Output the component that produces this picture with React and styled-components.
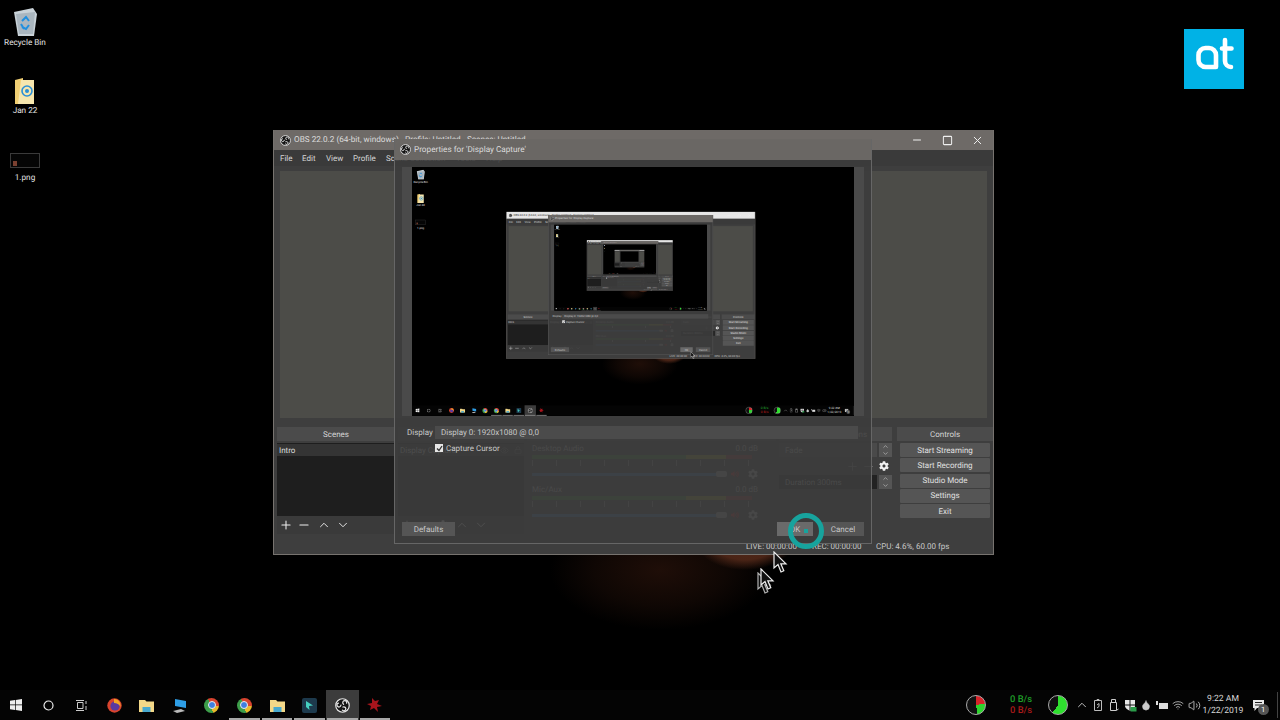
import styled, { createGlobalStyle } from 'styled-components'
import { Minus, Plus, Square, X, ChevronUp, ChevronDown, Eye, Lock, Droplet, Wifi, Volume2 } from 'lucide-react'
import { FaCog, FaVolumeUp } from 'react-icons/fa'

const SCALE = 0.3453
const MAX_DEPTH = 3

const GlobalStyle = createGlobalStyle`
  html, body {
    margin: 0;
    width: 1280px;
    height: 720px;
    overflow: hidden;
    background: #000;
    font-family: Roboto, "Liberation Sans", sans-serif;
    text-rendering: geometricPrecision;
  }
`

const Desktop = styled.div`
  width: 1280px;
  height: 720px;
  display: flex;
  flex-direction: column;
  background:
    radial-gradient(ellipse 50px 30px at 745px 540px, #552a1a 0%, #4a2416 66%, transparent 100%),
    radial-gradient(ellipse 110px 60px at 660px 570px, #1f0e08 0%, #0f0704 60%, transparent 100%),
    #000;
`
const WorkArea = styled.div`
  position: relative;
  flex: 1;
`
const IconColumn = styled.div`
  width: 50px;
  display: flex;
  flex-direction: column;
  align-items: center;
  padding-top: 7px;
`
const DesktopItem = styled.div`
  display: flex;
  flex-direction: column;
  align-items: center;
  height: ${(p) => p.$h}px;
  gap: ${(p) => p.$gap || 0}px;
  color: #e4e4e4;
  font-size: 8.2px;
  white-space: nowrap;
`
const Thumb = styled.div`
  width: 30px;
  height: 15px;
  margin-top: 1px;
  border: 1px solid #3a3a3a;
  background: #050505;
  display: flex;
  align-items: flex-end;
  padding: 0 0 1px 2px;
  box-sizing: border-box;
`
const ThumbDot = styled.div`
  width: 4px;
  height: 5px;
  background: #7a4030;
`
const LogoBox = styled.div`
  position: absolute;
  left: 1184px;
  top: 29px;
  width: 60px;
  height: 60px;
  background: #00b2e6;
`
const Win = styled.div`
  position: absolute;
  left: 273px;
  top: 130px;
  width: 721px;
  height: 425px;
  box-sizing: border-box;
  display: flex;
  flex-direction: column;
  background: #3e3e3e;
  border: 1px solid #77736f;
  border-top: none;
  color: #d6d6d6;
  font-size: 8px;
`
const TitleBar = styled.div`
  height: 20px;
  flex: none;
  display: flex;
  align-items: center;
  padding-left: 6px;
  gap: 3px;
  background: ${(p) => (p.$light ? '#e6e6e6' : '#6e6a67')};
  color: ${(p) => (p.$light ? '#333' : '#dcdcdc')};
  font-size: 8.2px;
  white-space: nowrap;
`
const WinButtons = styled.div`
  margin-left: auto;
  display: flex;
  color: #f0f0f0;
`
const WinButton = styled.div`
  width: 30px;
  height: 20px;
  margin-right: ${(p) => p.$mr || 0}px;
  display: flex;
  align-items: center;
  justify-content: center;
`
const MenuBar = styled.div`
  height: 16px;
  flex: none;
  display: flex;
  align-items: center;
  padding-left: 6px;
  background: #3a3a3a;
`
const MenuItem = styled.span`
  width: ${(p) => p.$w}px;
  white-space: nowrap;
`
const MainPreview = styled.div`
  height: 247px;
  flex: none;
  margin: 5px 6px 9px;
  background: #4c4c48;
`
const Docks = styled.div`
  flex: 1;
  display: grid;
  grid-template-columns: 118px 126px 249px 115px 96px;
  gap: 3px;
  padding: 0 0 0 3px;
  min-height: 0;
`
const Dock = styled.div`
  display: flex;
  flex-direction: column;
  min-width: 0;
`
const TransitionDock = styled(Dock)`
  padding-right: 2px;
`
const DockHead = styled.div`
  height: 14px;
  flex: none;
  margin-bottom: 2px;
  display: flex;
  align-items: center;
  justify-content: center;
  background: #4b4b4b;
`
const List = styled.div`
  height: 73px;
  flex: none;
  background: #1e1e1e;
  padding-top: 1px;
  box-sizing: border-box;
`
const ListRow = styled.div`
  height: 12px;
  display: flex;
  align-items: center;
  gap: 3px;
  padding: 0 2px;
  background: #343434;
  color: #dcdcdc;
`
const RowIcons = styled.div`
  margin-left: auto;
  display: flex;
  gap: 5px;
  color: #777;
`
const Toolbar = styled.div`
  height: 18px;
  display: flex;
  align-items: center;
  background: #3a3a3a;
  color: #eee;
`
const ToolSlot = styled.div`
  width: ${(p) => p.$w}px;
  display: flex;
  justify-content: center;
`
const Channel = styled.div`
  height: 41px;
  flex: none;
  padding: 1px 6px 0 5px;
  box-sizing: border-box;
`
const ChannelHead = styled.div`
  display: flex;
  justify-content: space-between;
  height: 11px;
  padding-right: 12px;
  color: #bbb;
`
const Meter = styled.div`
  height: 4px;
  margin-right: 18px;
  background: linear-gradient(90deg, #3f7a3a 0 70%, #8a8a30 70% 88%, #8a3a3a 88%);
`
const Ticks = styled.div`
  height: 6px;
  margin: 1px 18px 0 0;
  background: repeating-linear-gradient(90deg, #888 0 1px, transparent 1px 24px);
`
const SliderRow = styled.div`
  display: flex;
  align-items: center;
  height: 12px;
  margin-top: 2px;
`
const SliderTrack = styled.div`
  width: 184px;
  height: 3px;
  background: #3d6ea5;
`
const SliderHandle = styled.div`
  width: 11px;
  height: 6px;
  border-radius: 2px;
  background: #999;
`
const RedIcon = styled.div`
  margin-left: 4px;
  display: flex;
  color: #c42a2a;
`
const GearSlot = styled.div`
  margin-left: 9px;
  display: flex;
  color: #aaa;
`
const ComboRow = styled.div`
  display: flex;
  align-items: center;
  height: 14px;
  gap: 2px;
`
const Combo = styled.div`
  flex: 1;
  height: 14px;
  padding-left: 6px;
  display: flex;
  align-items: center;
  background: ${(p) => p.$bg || '#4a4a4a'};
  color: #bbb;
`
const Spinner = styled.div`
  width: 13px;
  height: 14px;
  display: flex;
  flex-direction: column;
  align-items: center;
  justify-content: center;
  background: #555;
  color: #ccc;
`
const ActionRow = styled.div`
  display: flex;
  align-items: center;
  justify-content: flex-end;
  height: 18px;
  color: #888;
`
const GearBright = styled.div`
  width: 16px;
  display: flex;
  justify-content: center;
  color: ${(p) => p.$color || '#f2f2f2'};
`
const ControlButton = styled.div`
  height: 14px;
  margin: 0 3px 1.3px 3px;
  display: flex;
  align-items: center;
  justify-content: center;
  border-radius: 1px;
  background: #555;
  color: #e0e0e0;
`
const StatusBar = styled.div`
  height: 15px;
  flex: none;
  display: flex;
  align-items: center;
  justify-content: flex-end;
  padding-right: 46px;
`
const StatusText = styled.span`
  width: ${(p) => p.$w}px;
  white-space: nowrap;
  color: #c8c8c8;
`
const Dialog = styled.div`
  position: absolute;
  left: 394px;
  top: 139px;
  width: 478px;
  height: 405px;
  box-sizing: border-box;
  display: flex;
  flex-direction: column;
  border: 1px solid #666;
  border-top: none;
  background: rgba(60, 60, 60, 0.9);
  color: #c8c8c8;
  font-size: 8px;
`
const DialogTitle = styled.div`
  height: 21px;
  flex: none;
  display: flex;
  align-items: center;
  gap: 3px;
  padding-left: 5px;
  background: rgba(110, 106, 103, 0.93);
  color: #dcdcdc;
  font-size: 8.2px;
  white-space: nowrap;
`
const PreviewStrip = styled.div`
  height: 249px;
  flex: none;
  margin: 7px 7px 0;
  padding: 0 10px;
  background: #4a4a4a;
`
const PreviewScreen = styled.div`
  width: 442px;
  height: 249px;
  overflow: hidden;
  background: #000;
`
const Scaled = styled.div`
  width: 1280px;
  height: 720px;
  transform: scale(${SCALE});
  transform-origin: 0 0;
`
const DisplayRow = styled.div`
  display: flex;
  align-items: center;
  height: 13px;
  margin: 10px 13px 0 12px;
`
const DisplayLabel = styled.span`
  width: 28px;
`
const DisplayCombo = styled.div`
  flex: 1;
  height: 13px;
  display: flex;
  align-items: center;
  padding-left: 6px;
  background: #4b4b4b;
`
const CheckRow = styled.div`
  display: flex;
  align-items: center;
  gap: 3px;
  height: 10px;
  margin: 4px 0 0 40px;
`
const CheckBox = styled.div`
  width: 8px;
  height: 8px;
  display: flex;
  align-items: center;
  justify-content: center;
  background: #e6e6e6;
`
const ButtonRow = styled.div`
  display: flex;
  align-items: center;
  height: 14px;
  margin: auto 7px 7px 7px;
`
const DialogButton = styled.div`
  width: ${(p) => p.$w}px;
  height: 14px;
  margin-left: ${(p) => p.$ml || 0}px;
  display: flex;
  align-items: center;
  justify-content: center;
  background: ${(p) => p.$bg || '#555'};
`
const Ring = styled.div`
  position: absolute;
  left: 788px;
  top: 513px;
  width: 36px;
  height: 36px;
  box-sizing: border-box;
  border: 5px solid #17a39d;
  border-radius: 50%;
  display: flex;
  align-items: center;
  justify-content: center;
`
const RingDot = styled.div`
  width: 4px;
  height: 4px;
  background: #17a39d;
`
const CursorMark = styled.svg`
  position: absolute;
  left: ${(p) => p.$x}px;
  top: ${(p) => p.$y}px;
  opacity: ${(p) => p.$o || 1};
`
const Taskbar = styled.div`
  height: 30px;
  flex: none;
  display: flex;
  align-items: center;
  background: #040404;
  color: #e6e6e6;
`
const TaskSlot = styled.div`
  position: relative;
  width: 32.6px;
  height: 30px;
  flex: none;
  display: flex;
  align-items: center;
  justify-content: center;
  background: ${(p) => (p.$active ? '#3c3c3c' : 'transparent')};
  &::after {
    content: '';
    position: absolute;
    left: 1px;
    right: 1px;
    bottom: 0;
    height: 2px;
    background: ${(p) => (p.$open ? '#a8a8a8' : 'transparent')};
  }
`
const Chrome = styled.div`
  width: 15px;
  height: 15px;
  border-radius: 50%;
  display: flex;
  align-items: center;
  justify-content: center;
  background: conic-gradient(from -30deg, #d8432f 0 120deg, #e8b92c 120deg 200deg, #3d9e4a 200deg 360deg);
`
const ChromeEye = styled.div`
  width: 6px;
  height: 6px;
  border-radius: 50%;
  border: 1px solid #eee;
  background: #3f7fe0;
`
const Tray = styled.div`
  margin-left: auto;
  display: flex;
  align-items: center;
  height: 30px;
  padding-right: 2px;
`
const TrayItem = styled.div`
  width: ${(p) => p.$w}px;
  margin-left: ${(p) => p.$ml || 0}px;
  flex: none;
  display: flex;
  align-items: center;
  justify-content: center;
  color: #c9c9c9;
`
const Pie = styled.div`
  width: 20px;
  height: 20px;
  box-sizing: border-box;
  border-radius: 50%;
  border: 1px solid #aaa;
  background: ${(p) => p.$fill};
`
const NetSpeed = styled.div`
  display: flex;
  flex-direction: column;
  align-items: center;
  font-size: 9.4px;
  line-height: 11px;
  font-weight: 500;
`
const NetLine = styled.span`
  color: ${(p) => p.$color};
`
const Clock = styled.div`
  display: flex;
  flex-direction: column;
  align-items: center;
  font-size: 8.6px;
  line-height: 12px;
  color: #d8d8d8;
  white-space: nowrap;
`
const NoteWrap = styled.div`
  position: relative;
  display: flex;
`
const NoteBadge = styled.div`
  position: absolute;
  right: -5px;
  bottom: -4px;
  width: 11px;
  height: 11px;
  border-radius: 50%;
  background: #555;
  color: #fff;
  font-size: 7.5px;
  line-height: 11px;
  text-align: center;
`
const TraySep = styled.div`
  width: 1px;
  height: 26px;
  margin-left: 5px;
  background: #444;
`

function ObsLogo({ size = 10 }) {
  return (
    <svg width={size} height={size} viewBox="0 0 20 20" fill="none">
      <circle cx="10" cy="10" r="9" fill="#151515" stroke="#e8e8e8" strokeWidth="1.6" />
      {[0, 120, 240].map((a) => (
        <path
          key={a}
          transform={`rotate(${a} 10 10)`}
          d="M11.5 8.5 C9.5 6.5 10 3.8 13 3.6 C15 3.5 16 5.5 15.5 7"
          stroke="#e8e8e8"
          strokeWidth="1.6"
          strokeLinecap="round"
        />
      ))}
    </svg>
  )
}

function Cursor({ x, y, o }) {
  return (
    <CursorMark $x={x} $y={y} $o={o} width="15" height="23" viewBox="0 0 15 23">
      <path d="M1 1 V17 L5 13.5 L8 21 L10.8 19.8 L7.8 12.8 H13 Z" fill="#111" stroke="#eee" strokeWidth="1.2" />
    </CursorMark>
  )
}

function RecycleBin() {
  return (
    <svg width="26" height="30" viewBox="0 0 26 30">
      <path d="M2 5 L21 1 L25 7 L22 29 H6 Z" fill="#c9d2d8" />
      <path d="M4 7 L23 5 L21 27 H7 Z" fill="#aab6bf" />
      <path d="M10 14 L14 10 L17 14 M17 18 L14 22 L10 20 M9 17 L12 22" fill="none" stroke="#1f8fe0" strokeWidth="2" />
    </svg>
  )
}

function FolderRing() {
  return (
    <svg width="20" height="28" viewBox="0 0 20 28">
      <path d="M0 3 L8 1 V27 H0 Z" fill="#f0cf74" />
      <path d="M6 3 H19 V27 H3 Z" fill="#f6e6ae" />
      <circle cx="12" cy="14" r="5" fill="none" stroke="#2a8fd6" strokeWidth="1.6" />
      <circle cx="12" cy="14" r="2" fill="#2a8fd6" />
    </svg>
  )
}

function AtLogo() {
  return (
    <svg width="60" height="60" viewBox="0 0 60 60" fill="none" stroke="#fff" strokeWidth="4.6" strokeLinecap="round">
      <path d="M32 38 V26 a7 7 0 0 0 -7 -7 h-3.5 a7 7 0 0 0 -7 7 v5 a7 7 0 0 0 7 7 H32" />
      <path d="M41 11 V32 a6 6 0 0 0 6 6 M38 19.5 H47.5" />
    </svg>
  )
}

function FolderIcon() {
  return (
    <svg width="15" height="13" viewBox="0 0 15 13">
      <path d="M0 1 H6 L7.5 2.5 H15 V13 H0 Z" fill="#f3d888" />
      <rect x="3.5" y="8" width="8" height="5" fill="#48a9cf" />
    </svg>
  )
}

function TaskIcons() {
  return (
    <>
      <TaskSlot>
        <svg width="12" height="12" viewBox="0 0 12 12" fill="#eee">
          <path d="M0 1.7 L5 1 V5.6 H0 Z M5.7 .9 L12 0 V5.6 H5.7 Z M0 6.3 H5 V11 L0 10.3 Z M5.7 6.3 H12 V12 L5.7 11.1 Z" />
        </svg>
      </TaskSlot>
      <TaskSlot>
        <svg width="11" height="11" viewBox="0 0 11 11">
          <circle cx="5.5" cy="5.5" r="4.5" fill="none" stroke="#eee" strokeWidth="1.2" />
        </svg>
      </TaskSlot>
      <TaskSlot>
        <svg width="12" height="11" viewBox="0 0 12 11" fill="none" stroke="#ccc">
          <path d="M2.5 2.5 H8 V8.5 H2.5 Z M1 .5 H9 M1 10.5 H9 M11 1 V4 M11 6 V10" />
        </svg>
      </TaskSlot>
      <TaskSlot>
        <svg width="15" height="15" viewBox="0 0 15 15">
          <circle cx="7.5" cy="7.5" r="7.2" fill="#d8442e" />
          <circle cx="8" cy="8" r="4.6" fill="#5a3aa0" />
          <path d="M7 1 C12 1 14 5 13.5 9 C12 6 10 5 7 5 Z" fill="#f5a623" />
        </svg>
      </TaskSlot>
      <TaskSlot>
        <FolderIcon />
      </TaskSlot>
      <TaskSlot>
        <svg width="15" height="15" viewBox="0 0 15 15">
          <path d="M3 1 L14 3 V10 L3 8 Z" fill="#2e9ee6" />
          <path d="M1 13 L9 11 L13 13 L5 15 Z" fill="#bbb" />
        </svg>
      </TaskSlot>
      <TaskSlot>
        <Chrome>
          <ChromeEye />
        </Chrome>
      </TaskSlot>
      <TaskSlot $open>
        <Chrome>
          <ChromeEye />
        </Chrome>
      </TaskSlot>
      <TaskSlot $open>
        <FolderIcon />
      </TaskSlot>
      <TaskSlot $open>
        <svg width="15" height="15" viewBox="0 0 15 15">
          <rect width="15" height="15" rx="2" fill="#1d3a4d" />
          <path d="M4 3 L11 7.5 L7 8 L7.5 12 L4 9 Z" fill="#45d0c0" />
        </svg>
      </TaskSlot>
      <TaskSlot $active $open>
        <ObsLogo size={15} />
      </TaskSlot>
      <TaskSlot $open>
        <svg width="15" height="14" viewBox="0 0 15 14" fill="#a8141c">
          <path d="M5 0 L8 3 L12 2 L10 6 L15 8 L10 9 L11 14 L7 10 L3 12 L4 8 L0 6 L5 5 Z" />
        </svg>
      </TaskSlot>
    </>
  )
}

function TrayIcons() {
  return (
    <Tray>
      <TrayItem $w={24}>
        <Pie $fill="conic-gradient(#d8242a 0 80deg, #2ed42e 80deg 170deg, #111 170deg)" />
      </TrayItem>
      <TrayItem $w={30} $ml={18}>
        <NetSpeed>
          <NetLine $color="#1f9e28">0 B/s</NetLine>
          <NetLine $color="#a81a1a">0 B/s</NetLine>
        </NetSpeed>
      </TrayItem>
      <TrayItem $w={24} $ml={10}>
        <Pie $fill="conic-gradient(#2fe02f 0 215deg, #111 215deg)" />
      </TrayItem>
      <TrayItem $w={16} $ml={4}>
        <ChevronUp size={14} strokeWidth={1.6} />
      </TrayItem>
      <TrayItem $w={16}>
        <svg width="8" height="12" viewBox="0 0 8 12" fill="none" stroke="#bbb">
          <path d="M.5 1.5 H7.5 V11.5 H.5 Z M3 1.5 V.5 H5 V1.5 M3 6 L5 4.5 V7.5 L3 9" />
        </svg>
      </TrayItem>
      <TrayItem $w={16}>
        <svg width="10" height="13" viewBox="0 0 10 13" fill="none" stroke="#ccc">
          <path d="M2.5 .5 H6.5 V3.5 H2.5 Z M1.5 3.5 H7.5 V11.5 H1.5 Z M8 11 L9.5 10" />
        </svg>
      </TrayItem>
      <TrayItem $w={16}>
        <svg width="13" height="13" viewBox="0 0 13 13" fill="#e8e8e8">
          <path d="M1 1 H11 V7 C11 9 8 11 6 12 C4 11 1 9 1 7 Z" />
          <path d="M6 1 V12 M1 6 H11" stroke="#111" strokeWidth="1" />
          <rect x="6.5" y="8" width="6" height="4.5" fill="#2a9d4a" />
        </svg>
      </TrayItem>
      <TrayItem $w={16}>
        <Droplet size={12} fill="#ccc" strokeWidth={1} />
      </TrayItem>
      <TrayItem $w={16}>
        <svg width="13" height="9" viewBox="0 0 13 9" fill="#ddd">
          <rect x="3" y="2" width="9" height="6" />
          <rect x="0" y="0" width="2" height="4" />
        </svg>
      </TrayItem>
      <TrayItem $w={16}>
        <Wifi size={12} strokeWidth={1.6} />
      </TrayItem>
      <TrayItem $w={16}>
        <Volume2 size={13} strokeWidth={1.6} />
      </TrayItem>
      <TrayItem $w={42}>
        <Clock>
          <span>9:22 AM</span>
          <span>1/22/2019</span>
        </Clock>
      </TrayItem>
      <TrayItem $w={28}>
        <NoteWrap>
          <svg width="11" height="11" viewBox="0 0 11 11" fill="#e8e8e8">
            <path d="M0 0 H11 V8 H4 L1.5 11 V8 H0 Z" />
            <path d="M2 2.5 H9 M2 5 H9" stroke="#222" />
          </svg>
          <NoteBadge>1</NoteBadge>
        </NoteWrap>
      </TrayItem>
      <TraySep />
    </Tray>
  )
}

function MixerChannel({ name }) {
  return (
    <Channel>
      <ChannelHead>
        <span>{name}</span>
        <span>0.0 dB</span>
      </ChannelHead>
      <Meter />
      <Ticks />
      <SliderRow>
        <SliderTrack />
        <SliderHandle />
        <RedIcon>
          <FaVolumeUp size={8} />
        </RedIcon>
        <GearSlot>
          <FaCog size={10} />
        </GearSlot>
      </SliderRow>
    </Channel>
  )
}

function MainWindow({ depth }) {
  const light = depth > 0
  return (
    <Win>
      <TitleBar $light={light}>
        <ObsLogo size={11} />
        OBS 22.0.2 (64-bit, windows) - Profile: Untitled - Scenes: Untitled
        <WinButtons>
          <WinButton>
            <Minus size={12} strokeWidth={2} />
          </WinButton>
          <WinButton>
            <Square size={11} strokeWidth={2.2} />
          </WinButton>
          <WinButton $mr={1}>
            <X size={13} strokeWidth={1.8} />
          </WinButton>
        </WinButtons>
      </TitleBar>
      <MenuBar>
        <MenuItem $w={22}>File</MenuItem>
        <MenuItem $w={24}>Edit</MenuItem>
        <MenuItem $w={27}>View</MenuItem>
        <MenuItem $w={33}>Profile</MenuItem>
        <MenuItem $w={70}>Scene Collection</MenuItem>
        <MenuItem $w={30}>Tools</MenuItem>
        <MenuItem $w={30}>Help</MenuItem>
      </MenuBar>
      <MainPreview />
      <Docks>
        <Dock>
          <DockHead>Scenes</DockHead>
          <List>
            <ListRow>Intro</ListRow>
          </List>
          <Toolbar>
            <ToolSlot $w={18}>
              <Plus size={14} strokeWidth={1.8} />
            </ToolSlot>
            <ToolSlot $w={18}>
              <Minus size={14} strokeWidth={1.8} />
            </ToolSlot>
            <ToolSlot $w={21}>
              <ChevronUp size={14} strokeWidth={1.6} />
            </ToolSlot>
            <ToolSlot $w={17}>
              <ChevronDown size={14} strokeWidth={1.6} />
            </ToolSlot>
          </Toolbar>
        </Dock>
        <Dock>
          <DockHead>Sources</DockHead>
          <List>
            <ListRow>
              Display Capture
              <RowIcons>
                <Eye size={9} />
                <Lock size={8} />
              </RowIcons>
            </ListRow>
          </List>
          <Toolbar>
            <ToolSlot $w={18}>
              <Plus size={14} strokeWidth={1.8} />
            </ToolSlot>
            <ToolSlot $w={18}>
              <Minus size={14} strokeWidth={1.8} />
            </ToolSlot>
            <ToolSlot $w={18}>
              <FaCog size={10} />
            </ToolSlot>
            <ToolSlot $w={20}>
              <ChevronUp size={14} strokeWidth={1.6} />
            </ToolSlot>
            <ToolSlot $w={17}>
              <ChevronDown size={14} strokeWidth={1.6} />
            </ToolSlot>
          </Toolbar>
        </Dock>
        <Dock>
          <DockHead>Mixer</DockHead>
          <MixerChannel name="Desktop Audio" />
          <MixerChannel name="Mic/Aux" />
        </Dock>
        <TransitionDock>
          <DockHead>Scene Transitions</DockHead>
          <ComboRow>
            <Combo>Fade</Combo>
            <Spinner>
              <ChevronUp size={7} />
              <ChevronDown size={7} />
            </Spinner>
          </ComboRow>
          <ActionRow>
            <GearBright $color="#888">
              <Plus size={13} strokeWidth={1.6} />
            </GearBright>
            <GearBright $color="#888">
              <Minus size={13} strokeWidth={1.6} />
            </GearBright>
            <GearBright>
              <FaCog size={10} />
            </GearBright>
          </ActionRow>
          <ComboRow>
            <Combo $bg="#222">Duration 300ms</Combo>
            <Spinner>
              <ChevronUp size={7} />
              <ChevronDown size={7} />
            </Spinner>
          </ComboRow>
        </TransitionDock>
        <Dock>
          <DockHead>Controls</DockHead>
          <ControlButton>Start Streaming</ControlButton>
          <ControlButton>Start Recording</ControlButton>
          <ControlButton>Studio Mode</ControlButton>
          <ControlButton>Settings</ControlButton>
          <ControlButton>Exit</ControlButton>
        </Dock>
      </Docks>
      <StatusBar>
        <StatusText $w={66}>LIVE: 00:00:00</StatusText>
        <StatusText $w={64}>REC: 00:00:00</StatusText>
        <StatusText $w={71}>CPU: 4.6%, 60.00 fps</StatusText>
      </StatusBar>
    </Win>
  )
}

function PropertiesDialog({ depth }) {
  return (
    <Dialog>
      <DialogTitle>
        <ObsLogo size={11} />
        Properties for 'Display Capture'
      </DialogTitle>
      <PreviewStrip>
        <PreviewScreen>
          {depth < MAX_DEPTH && (
            <Scaled>
              <Screen depth={depth + 1} />
            </Scaled>
          )}
        </PreviewScreen>
      </PreviewStrip>
      <DisplayRow>
        <DisplayLabel>Display</DisplayLabel>
        <DisplayCombo>Display 0: 1920x1080 @ 0,0</DisplayCombo>
      </DisplayRow>
      <CheckRow>
        <CheckBox>
          <svg width="7" height="7" viewBox="0 0 7 7" fill="none" stroke="#333" strokeWidth="1.3">
            <path d="M1 3.5 L3 5.5 L6 1" />
          </svg>
        </CheckBox>
        Capture Cursor
      </CheckRow>
      <ButtonRow>
        <DialogButton $w={53}>Defaults</DialogButton>
        <DialogButton $w={36} $ml={322} $bg="#6a6a6a">
          OK
        </DialogButton>
        <DialogButton $w={42} $ml={9}>
          Cancel
        </DialogButton>
      </ButtonRow>
    </Dialog>
  )
}

function Screen({ depth }) {
  return (
    <Desktop>
      <WorkArea>
        <IconColumn>
          <DesktopItem $h={70} $gap={1}>
            <RecycleBin />
            Recycle Bin
          </DesktopItem>
          <DesktopItem $h={75} $gap={1}>
            <FolderRing />
            Jan 22
          </DesktopItem>
          <DesktopItem $h={40} $gap={5}>
            <Thumb>
              <ThumbDot />
            </Thumb>
            1.png
          </DesktopItem>
        </IconColumn>
        <MainWindow depth={depth} />
        <PropertiesDialog depth={depth} />
        {depth === 0 && (
          <>
            <LogoBox>
              <AtLogo />
            </LogoBox>
            <Ring>
              <RingDot />
            </Ring>
            <Cursor x={773} y={551} />
            <Cursor x={757} y={572} o={0.75} />
            <Cursor x={760} y={568} />
          </>
        )}
        {depth > 0 && <Cursor x={806} y={534} />}
      </WorkArea>
      <Taskbar>
        <TaskIcons />
        <TrayIcons />
      </Taskbar>
    </Desktop>
  )
}

export default function App() {
  return (
    <>
      <GlobalStyle />
      <Screen depth={0} />
    </>
  )
}
